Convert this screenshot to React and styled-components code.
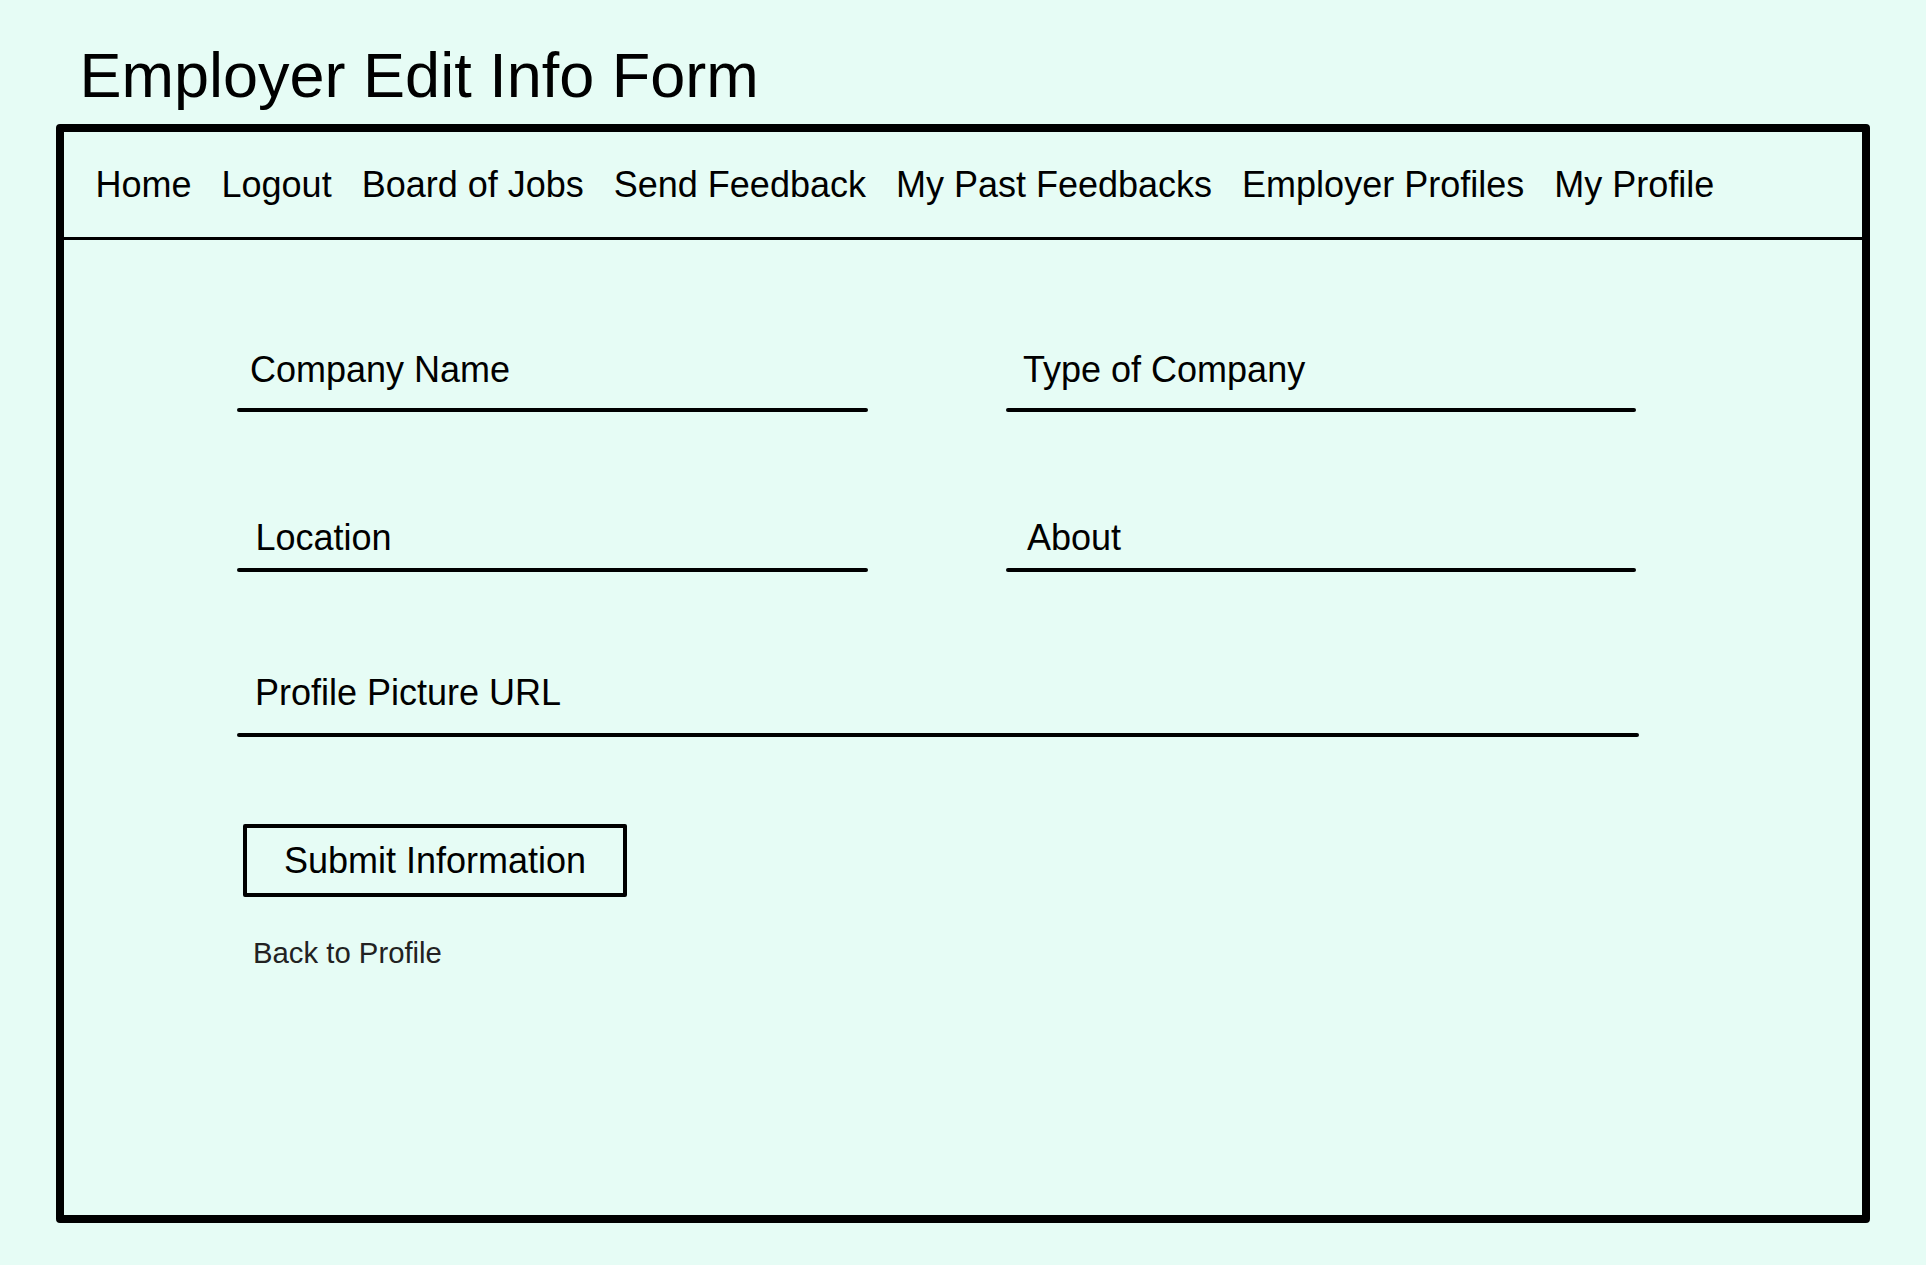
import React from "react";
import styled, { createGlobalStyle } from "styled-components";

const GlobalStyle = createGlobalStyle`
  html, body {
    margin: 0;
    padding: 0;
    background: #e6fcf5;
  }
  body {
    font-family: "Liberation Sans", Arial, Helvetica, sans-serif;
    color: #000;
  }
  * { box-sizing: border-box; }
`;

const Page = styled.div`
  min-height: 100vh;
  padding-top: 44px;
  padding-bottom: 40px;
  background: #e6fcf5;
`;

const Title = styled.h1`
  margin: 0 0 0 79.5px;
  font-size: 63px;
  line-height: 63px;
  font-weight: 400;
  color: #000;
`;

const Frame = styled.div`
  margin: 17px 0 0 56px;
  width: 1814px;
  height: 1099px;
  border: 8px solid #000;
  border-radius: 4px;
  display: flex;
  flex-direction: column;
`;

const NavBar = styled.nav`
  height: 108px;
  border-bottom: 3px solid #000;
  display: flex;
  align-items: center;
  gap: 30px;
  padding-left: 31.5px;
`;

const NavLink = styled.a`
  font-size: 36px;
  color: #000;
  text-decoration: none;
  cursor: pointer;
  white-space: nowrap;
`;

const Form = styled.form`
  display: flex;
  flex-direction: column;
  align-items: flex-start;
  padding: 111.5px 0 0 173px;
`;

const FieldRow = styled.div`
  display: grid;
  grid-template-columns: 631px 630px;
  column-gap: 138px;
  margin-top: ${(p) => p.$top || 0}px;
`;

const Field = styled.label`
  display: flex;
  flex-direction: column;
  width: ${(p) => (p.$wide ? "1402px" : "auto")};
  margin-top: ${(p) => p.$top || 0}px;
`;

const LabelText = styled.span`
  font-size: 36px;
  line-height: 36px;
  padding-left: ${(p) => p.$indent}px;
  color: #000;
`;

const Rule = styled.span`
  display: block;
  height: 4px;
  background: #000;
  border-radius: 2px;
  margin-top: ${(p) => p.$gap}px;
`;

const SubmitButton = styled.button`
  margin: 87px 0 0 6px;
  width: 384px;
  height: 73px;
  border: 4px solid #000;
  border-radius: 2px;
  background: transparent;
  font-family: "Liberation Sans", Arial, sans-serif;
  font-size: 36px;
  color: #000;
  padding: 0;
  cursor: pointer;
`;

const BackLink = styled.a`
  margin: 41px 0 0 16px;
  font-size: 29.3px;
  line-height: 29.3px;
  color: #222;
  text-decoration: none;
  cursor: pointer;
`;

const navItems = [
  "Home",
  "Logout",
  "Board of Jobs",
  "Send Feedback",
  "My Past Feedbacks",
  "Employer Profiles",
  "My Profile",
];

export default function App() {
  return (
    <>
      <GlobalStyle />
      <Page>
        <Title>Employer Edit Info Form</Title>
        <Frame>
          <NavBar>
            {navItems.map((item) => (
              <NavLink key={item}>{item}</NavLink>
            ))}
          </NavBar>
          <Form onSubmit={(e) => e.preventDefault()}>
            <FieldRow>
              <Field>
                <LabelText $indent={13}>Company Name</LabelText>
                <Rule $gap={20.5} />
              </Field>
              <Field>
                <LabelText $indent={17}>Type of Company</LabelText>
                <Rule $gap={20.5} />
              </Field>
            </FieldRow>
            <FieldRow $top={107.5}>
              <Field>
                <LabelText $indent={18.5}>Location</LabelText>
                <Rule $gap={12.5} />
              </Field>
              <Field>
                <LabelText $indent={21}>About</LabelText>
                <Rule $gap={12.5} />
              </Field>
            </FieldRow>
            <Field $wide $top={102.5}>
              <LabelText $indent={18}>Profile Picture URL</LabelText>
              <Rule $gap={22.5} />
            </Field>
            <SubmitButton type="submit">Submit Information</SubmitButton>
            <BackLink>Back to Profile</BackLink>
          </Form>
        </Frame>
      </Page>
    </>
  );
}
